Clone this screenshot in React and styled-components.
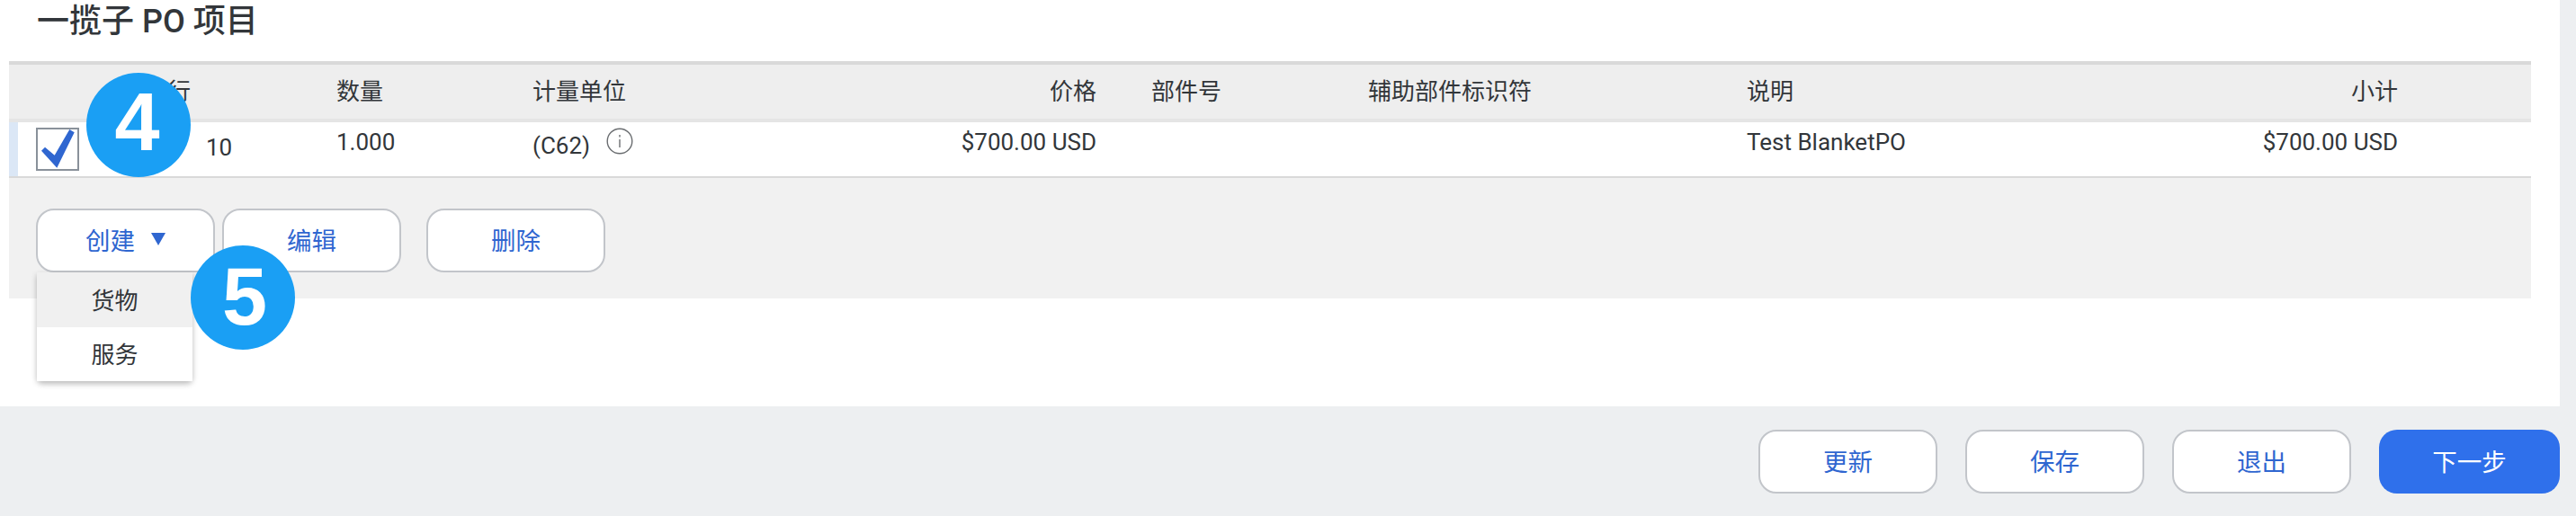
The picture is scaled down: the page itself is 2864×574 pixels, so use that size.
import React from "react";
import styled, { createGlobalStyle } from "styled-components";

const Global = createGlobalStyle`
  html, body { margin: 0; padding: 0; background: #edeff1; }
  body { font-family: Roboto, "Noto Sans CJK SC", sans-serif; color: #32363a; }
`;
const Shell = styled.div`
  position: relative;
  width: 2864px;
  height: 574px;
  overflow: hidden;
  display: flex;
  flex-direction: column;
`;
const Panel = styled.main`
  width: 2846px;
  height: 452px;
  flex: none;
  background: #fff;
  padding-left: 10px;
  box-sizing: border-box;
`;
const Title = styled.h2`
  margin: 0;
  height: 68px;
  padding-left: 31px;
  font-size: 36px;
  line-height: 48px;
  font-weight: 500;
  box-sizing: border-box;
`;
const TableBox = styled.div`
  position: relative;
  width: 2804px;
`;
const cols = "176px 188px 218px 208px 419px 302px 421px 400px 324px 148px";
const HeadRow = styled.div`
  display: grid;
  grid-template-columns: ${cols};
  height: 68px;
  box-sizing: border-box;
  background: #eeeeee;
  border-top: 4px solid #d9d9d9;
  border-bottom: 4px solid #e5e5e5;
  align-items: center;
  font-size: 26px;
  line-height: 36px;
`;
const DataRow = styled.div`
  display: grid;
  grid-template-columns: ${cols};
  height: 62px;
  box-sizing: border-box;
  background: #fff;
  border-bottom: 2px solid #d9d9d9;
  font-size: 26px;
  line-height: 36px;
  align-items: start;
`;
const Cell = styled.div`
  text-align: ${(p) => (p.$end ? "right" : "left")};
  padding-left: ${(p) => p.$left || 0}px;
  padding-top: ${(p) => p.$top || 0}px;
  white-space: nowrap;
`;
const SelectCell = styled.div`
  height: 60px;
  box-sizing: border-box;
  border-left: 10px solid #dbe7f6;
  padding: 6px 0 0 20px;
`;
const CheckBox = styled.span`
  display: block;
  width: 48px;
  height: 48px;
  box-sizing: border-box;
  border: 2px solid #89919a;
  background: #fff;
  position: relative;
`;
const CheckMark = styled.svg`
  position: absolute;
  left: -2px;
  top: -2px;
  width: 48px;
  height: 48px;
`;
const UnitWrap = styled.div`
  display: flex;
  align-items: flex-start;
  gap: 18px;
  padding-top: 8px;
`;
const InfoIcon = styled.svg`
  width: 30px;
  height: 30px;
  margin-top: -2px;
`;
const Toolbar = styled.div`
  position: relative;
  height: 134px;
  box-sizing: border-box;
  background: #f1f1f1;
  padding: 34px 0 0 30px;
  display: flex;
  align-items: flex-start;
  gap: 8px;
`;
const Button = styled.button`
  width: ${(p) => p.$w || 199}px;
  height: 71px;
  flex: none;
  box-sizing: border-box;
  margin-left: ${(p) => p.$ml || 0}px;
  border-radius: 20px;
  border: ${(p) => (p.$primary ? "none" : "2px solid #c2c5ca")};
  background: ${(p) => (p.$primary ? "#2f70eb" : "#fff")};
  color: ${(p) => (p.$primary ? "#fff" : "#2f66d0")};
  font-family: inherit;
  font-size: 27.5px;
  padding: 0 0 4px;
  display: inline-flex;
  align-items: center;
  justify-content: center;
  gap: 18px;
`;
const Menu = styled.div`
  position: absolute;
  left: 31px;
  top: 105px;
  width: 173px;
  background: #fff;
  border-radius: 0 0 6px 6px;
  box-shadow: 0 3px 6px rgba(0, 0, 0, 0.28);
  z-index: 2;
`;
const MenuItem = styled.div`
  height: 60.5px;
  box-sizing: border-box;
  padding-bottom: 2px;
  display: flex;
  align-items: center;
  justify-content: center;
  font-size: 26px;
  background: ${(p) => (p.$active ? "#f0f0f0" : "#fff")};
`;
const Badge = styled.div`
  position: absolute;
  left: ${(p) => p.$x}px;
  top: ${(p) => p.$y}px;
  width: 116px;
  height: 116px;
  border-radius: 50%;
  background: #1a9ff4;
  color: #fff;
  font-family: "Liberation Sans", sans-serif;
  font-weight: 700;
  font-size: 90px;
  line-height: ${(p) => p.$lh}px;
  text-indent: ${(p) => p.$dx}px;
  text-align: center;
  z-index: 3;
`;
const Footer = styled.footer`
  flex: 1;
  display: flex;
  justify-content: flex-end;
  align-items: flex-start;
  gap: 31px;
  padding: 26px 18px 0 0;
`;
const Caret = styled.svg`
  width: 16px;
  height: 14px;
`;

export default function App() {
  return (
    <Shell>
      <Global />
      <Panel>
        <Title>一揽子 PO 项目</Title>
        <TableBox>
          <HeadRow>
            <Cell />
            <Cell>行</Cell>
            <Cell>数量</Cell>
            <Cell>计量单位</Cell>
            <Cell $end>价格</Cell>
            <Cell $left={61}>部件号</Cell>
            <Cell>辅助部件标识符</Cell>
            <Cell>说明</Cell>
            <Cell $end>小计</Cell>
            <Cell />
          </HeadRow>
          <DataRow>
            <SelectCell>
              <CheckBox>
                <CheckMark viewBox="0 0 48 48">
                  <polygon points="6,25.7 10,21.7 20.7,30.7 37.3,2 42.7,5.3 23.3,44.7" fill="#2f66d0" />
                </CheckMark>
              </CheckBox>
            </SelectCell>
            <Cell $left={43} $top={10}>10</Cell>
            <Cell $top={4}>1.000</Cell>
            <UnitWrap>
              (C62)
              <InfoIcon viewBox="0 0 30 30" fill="none" stroke="#6a6d70" strokeWidth="1.4">
                <circle cx="15" cy="15" r="13.8" />
                <line x1="15" y1="13" x2="15" y2="22" />
                <line x1="15" y1="8" x2="15" y2="10.4" />
              </InfoIcon>
            </UnitWrap>
            <Cell $end $top={4}>$700.00 USD</Cell>
            <Cell />
            <Cell />
            <Cell $top={4}>Test BlanketPO</Cell>
            <Cell $end $top={4}>$700.00 USD</Cell>
            <Cell />
          </DataRow>
          <Toolbar>
            <Button>
              创建
              <Caret viewBox="0 0 16 14"><polygon points="0,0 16,0 8,14" fill="#2f66d0" /></Caret>
            </Button>
            <Button>编辑</Button>
            <Button $ml={20}>删除</Button>
            <Menu>
              <MenuItem $active>货物</MenuItem>
              <MenuItem>服务</MenuItem>
            </Menu>
          </Toolbar>
        </TableBox>
      </Panel>
      <Footer>
        <Button>更新</Button>
        <Button>保存</Button>
        <Button>退出</Button>
        <Button $primary $w={201}>下一步</Button>
      </Footer>
      <Badge $x={96} $y={81} $lh={110} $dx={-3}>4</Badge>
      <Badge $x={212} $y={273} $lh={115} $dx={4}>5</Badge>
    </Shell>
  );
}
